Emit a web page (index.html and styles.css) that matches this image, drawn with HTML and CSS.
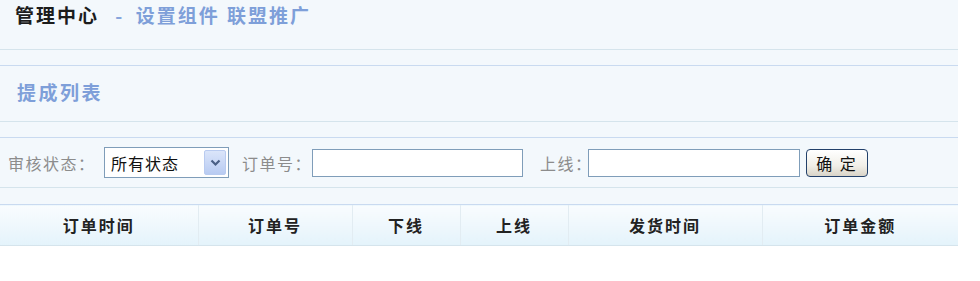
FILE: index.html
```html
<!DOCTYPE html>
<html lang="zh-CN">
<head>
  <meta charset="UTF-8">
  <title>提成列表</title>
  <link rel="stylesheet" href="styles.css">
</head>
<body>
  <div class="wrap">

    <div class="crumb">
      <span class="crumb-home">管理中心</span>
      <span class="crumb-sep">-</span>
      <a class="crumb-link" href="#">设置组件</a>
      <a class="crumb-link" href="#">联盟推广</a>
    </div>

    <div class="box title-box">提成列表</div>

    <!-- filter bar -->
    <form class="box filter">
      <label class="lbl lbl-status">审核状态：</label>
      <span class="select">
        <select>
          <option>所有状态</option>
          <option>已审核</option>
          <option>未审核</option>
        </select>
        <span class="select-arrow">
          <svg width="11" height="8" viewBox="0 0 11 8"><path d="M1.5 1.5 L5.5 5.5 L9.5 1.5" fill="none" stroke="#4a5f86" stroke-width="2.2"/></svg>
        </span>
      </span>
      <label class="lbl lbl-order">订单号：</label>
      <input class="txt txt-order" type="text">
      <label class="lbl lbl-up">上线：</label>
      <input class="txt txt-up" type="text">
      <button class="btn" type="button">确 定</button>
    </form>

    <table class="list">
      <colgroup>
        <col style="width:198px">
        <col style="width:154px">
        <col style="width:108px">
        <col style="width:108px">
        <col style="width:194px">
        <col style="width:196px">
      </colgroup>
      <thead>
        <tr>
          <th>订单时间</th>
          <th>订单号</th>
          <th>下线</th>
          <th>上线</th>
          <th>发货时间</th>
          <th>订单金额</th>
        </tr>
      </thead>
    </table>

  </div>
</body>
</html>
```

FILE: styles.css
```css
body {
  margin: 0;
  background: #fff;
  font-family: "Noto Sans CJK SC", "Liberation Sans", sans-serif;
}

.wrap {
  width: 958px;
  background: #f3f8fc;
}

.crumb {
  height: 45px;
  padding: 4px 0 0 15px;
  line-height: 22px;
  font-size: 19px;
  font-weight: bold;
  letter-spacing: 2px;
  border-bottom: 1px solid #d5e4ec;
  margin-bottom: 15px;
}

.crumb-home {
  color: #1c1c1c;
}

.crumb-sep {
  color: #87a5dc;
  margin: 0 5px 0 10px;
}

.crumb-link {
  color: #7e9fd9;
  text-decoration: none;
  margin-right: 1px;
}

.box {
  border-top: 1px solid #c9daf0;
  border-bottom: 1px solid #d5e4ec;
}

.title-box {
  height: 50px;
  padding: 0 0 5px 17px;
  display: flex;
  align-items: center;
  font-size: 19px;
  font-weight: bold;
  letter-spacing: 2.5px;
  color: #7e9fd9;
  margin-bottom: 15px;
}

.filter {
  height: 49px;
  margin: 0 0 16px;
  padding-left: 8px;
  display: flex;
  align-items: center;
  font-size: 16px;
}

.lbl {
  color: #8c8c8c;
  letter-spacing: 1.5px;
  white-space: nowrap;
}

.lbl-status { width: 96px; }
.lbl-order { width: 70px; margin-left: 13px; }
.lbl-up { width: 48px; margin-left: 17px; }

.select {
  width: 125px;
  height: 31px;
  box-sizing: border-box;
  border: 1px solid #7f9db9;
  background: #fff;
  display: flex;
  align-items: center;
  padding: 2px;
}

.select select {
  flex: 1;
  -webkit-appearance: none;
  appearance: none;
  border: none;
  background: transparent;
  font-family: inherit;
  font-size: 16px;
  letter-spacing: 1px;
  color: #111;
  padding: 0 0 0 4px;
  outline: none;
}

.select-arrow {
  width: 22px;
  height: 25px;
  box-sizing: border-box;
  border: 1px solid #b9cbf0;
  border-radius: 2px;
  background: linear-gradient(#dbe5fa, #b8cbf2);
  display: flex;
  align-items: center;
  justify-content: center;
}

.txt {
  height: 28px;
  box-sizing: border-box;
  border: 1px solid #7f9db9;
  background: #fff;
  padding: 0 4px;
  font-size: 14px;
  margin: 0;
}

.txt-order { width: 211px; }
.txt-up { width: 212px; }

.btn {
  width: 62px;
  height: 28px;
  margin-left: 6px;
  padding: 0;
  border: 1px solid #22406a;
  border-radius: 4px;
  background: linear-gradient(#ffffff, #f1efe8 60%, #d9d4c8);
  font-family: inherit;
  font-size: 16px;
  color: #111;
  letter-spacing: 2px;
}

.list {
  width: 958px;
  border-collapse: collapse;
  table-layout: fixed;
}

.list th {
  height: 40px;
  padding: 0;
  border-top: 1px solid #c9daf0;
  border-bottom: 1px solid #d5e4ec;
  border-left: 1px solid #e2ecf2;
  background: linear-gradient(#f9fcfe, #e4f3fb);
  font-size: 16px;
  font-weight: bold;
  letter-spacing: 2px;
  color: #222;
  text-align: center;
}

.list th:first-child {
  border-left: none;
}
```
